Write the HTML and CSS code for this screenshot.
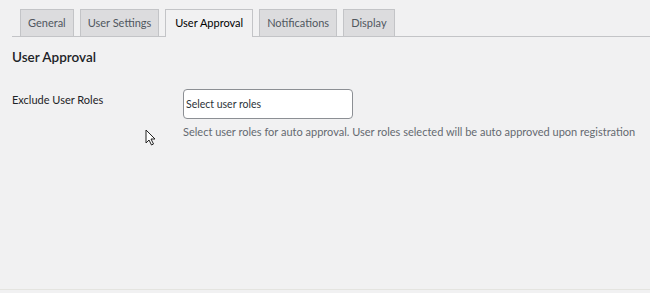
FILE: index.html
```html
<!DOCTYPE html>
<html lang="en">
<head>
    <meta charset="UTF-8">
    <title>User Approval Settings</title>
    <link rel="stylesheet" href="styles.css">
</head>
<body>
    <div class="wrap">
        <nav class="nav-tabs">
            <a class="nav-tab">General</a>
            <a class="nav-tab">User Settings</a>
            <a class="nav-tab active">User Approval</a>
            <a class="nav-tab">Notifications</a>
            <a class="nav-tab">Display</a>
        </nav>

        <h2 class="section-title">User Approval</h2>

        <div class="field-row">
            <label class="field-label">Exclude User Roles</label>
            <div class="field-input">
                <div class="select-box">Select user roles</div>
                <p class="description">Select user roles for auto approval. User roles selected will be auto approved upon registration</p>
            </div>
        </div>

        <svg class="cursor" width="11" height="17" viewBox="0 0 11 17">
            <path d="M1 1 L1 14 L4 11 L6.5 16 L8.5 15 L6 10 L10 10 Z" fill="#fff" stroke="#222" stroke-width="1"/>
        </svg>
    </div>
</body>
</html>
```

FILE: styles.css
```css
body {
    margin: 0;
    background: #f1f1f2;
    font-family: Lato, "Open Sans", sans-serif;
    color: #1d2327;
}

.wrap {
    position: relative;
    height: 289px;
    padding-left: 12px;
    border-bottom: 1px solid #e4e4e0;
}

.nav-tabs {
    display: flex;
    gap: 6px;
    padding: 9px 0 0 8px;
    border-bottom: 1px solid #c3c4c7;
}

.nav-tab {
    height: 26px;
    line-height: 26px;
    padding: 0 7px;
    margin-bottom: -1px;
    background: #dcdcde;
    border: 1px solid #c3c4c7;
    border-bottom: none;
    color: #50575e;
    font-size: 11px;
}

.nav-tab.active {
    background: #f1f1f2;
    color: #000;
    height: 27px;
    padding: 0 9px;
}

.section-title {
    margin: 11px 0 0 0;
    font-size: 13.5px;
    font-weight: 600;
    line-height: 18px;
}

.field-row {
    display: flex;
    margin-top: 23px;
}

.field-label {
    width: 171px;
    font-size: 11px;
    padding-top: 4px;
}

.select-box {
    width: 166px;
    height: 28px;
    line-height: 28px;
    padding-left: 2px;
    background: #fff;
    border: 1px solid #8c8f94;
    border-radius: 4px;
    font-size: 10.5px;
    color: #2c3338;
}

.description {
    margin: 6px 0 0 0;
    font-size: 11px;
    color: #646970;
}

.cursor {
    position: absolute;
    left: 145px;
    top: 129px;
}
```
